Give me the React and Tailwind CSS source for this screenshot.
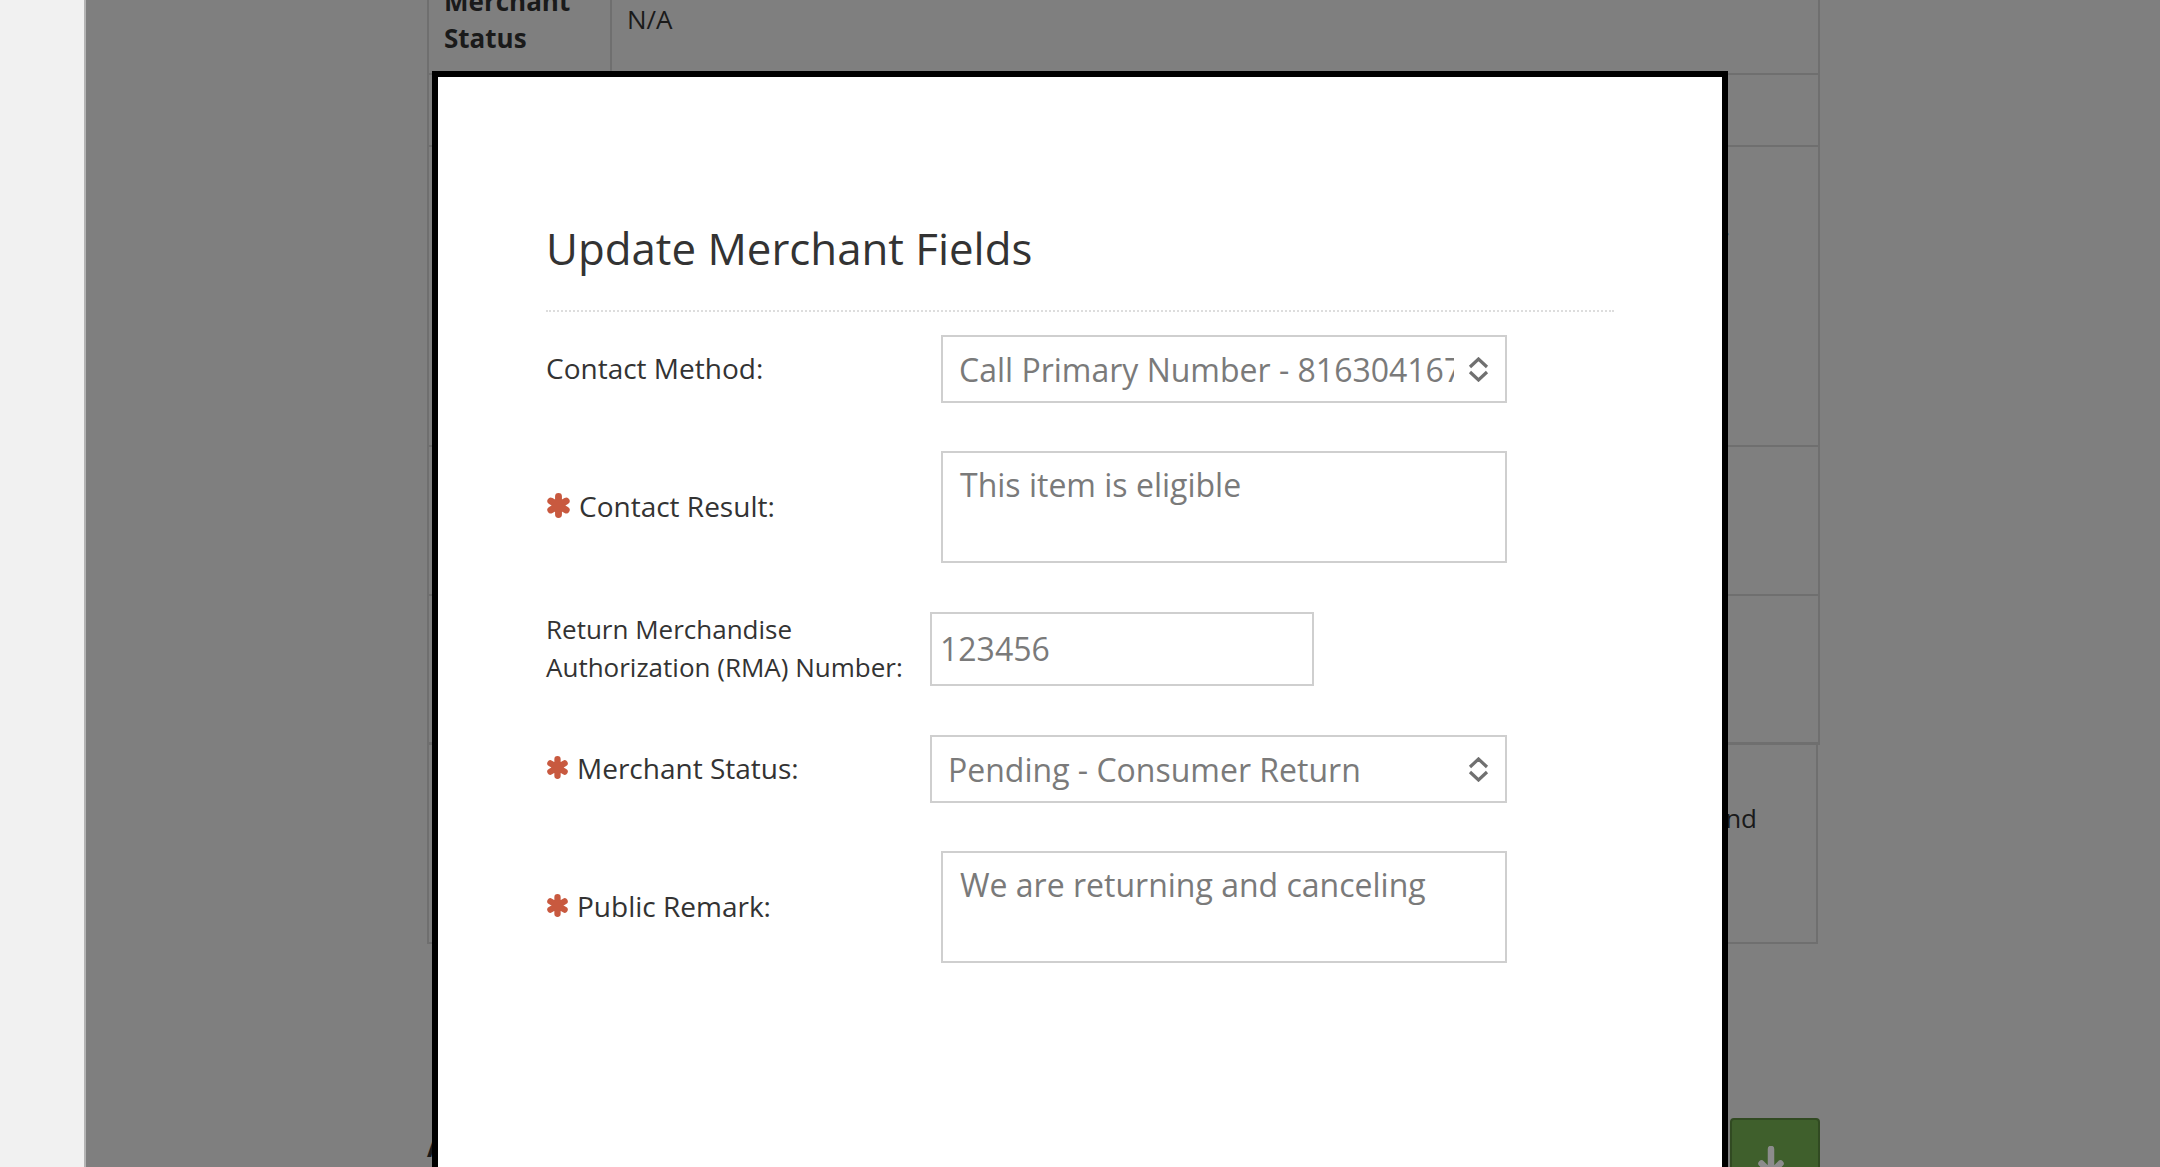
import React from "react";

function Asterisk({ className }) {
  return (
    <svg viewBox="0 0 24 24" className={className} fill="none" stroke="#c8593f" strokeWidth="6.600" strokeLinecap="round">
      <path d="M12 3.400v17.200M4.600 7.700l14.800 8.600M19.400 7.700l-14.800 8.600" />
    </svg>
  );
}

function Chevrons() {
  return (
    <svg viewBox="0 0 21 25" className="absolute right-[18px] top-[22px] w-[21px] h-[25px] pointer-events-none" fill="none" stroke="#707070" strokeWidth="3.2">
      <path d="M2 10l8.500-8 8.500 8M2 15l8.500 8 8.500-8" />
    </svg>
  );
}

function Select({ className, value, padding }) {
  return (
    <div className={"relative h-[68px] " + className}>
      <select
        defaultValue={value}
        className={"w-full h-full appearance-none bg-white border-2 border-[#cfcfcf] rounded-none pt-[2px] pr-[51px] text-[32px] text-[#7a7a7a] outline-none " + padding}
      >
        <option>{value}</option>
      </select>
      <Chevrons />
    </div>
  );
}

function Area({ value }) {
  return (
    <textarea
      defaultValue={value}
      rows={2}
      className="w-[566px] h-[112px] border-2 border-[#cfcfcf] pl-[17px] pt-[10px] resize-none outline-none text-[32px] leading-[44px] text-[#7a7a7a]"
    />
  );
}

export default function App() {
  return (
    <div className="flex h-screen overflow-hidden font-['Open_Sans',sans-serif]">
      <div className="w-[86px] shrink-0 bg-[#f1f1f1] border-r-2 border-[#b4b4b4]" />

      <div className="relative flex-1 bg-[#7f7f7f] pl-[341px] pr-[340px] text-[26px] text-[#1a1a1a]">
        {/* page behind the dialog */}
        <div className="w-[1393px] flex flex-col">
          <div className="flex h-[75px] border-x-2 border-b-2 border-[#6f6f6f]">
            <div className="w-[183px] -mt-[30px] pl-[15px] pt-[13px] font-bold leading-[37px] border-r-2 border-[#6f6f6f]">
              Merchant
              <br />
              Status
            </div>
            <div className="pl-[15px] pt-[1px] leading-[37px]">N/A</div>
          </div>
          <div className="h-[72px] border-x-2 border-b-2 border-[#6f6f6f]" />
          <div className="h-[300px] border-x-2 border-b-2 border-[#6f6f6f] flex justify-end pr-[88px] pt-[60px]">.</div>
          <div className="h-[149px] border-x-2 border-b-2 border-[#6f6f6f]" />
          <div className="h-[149px] border-x-2 border-b-[3px] border-[#6f6f6f]" />
          <div className="h-[199px] border-x-2 border-b-2 border-[#6f6f6f] flex justify-end pr-[59px] pt-[54px] mr-[2px]">and</div>

          <div className="flex justify-between mt-[174px]">
            <div className="pt-[10px] font-bold">Add</div>
            <div className="w-[90px] h-[60px] flex justify-center pt-[26px] pr-[9px] bg-[#3f5f2c] border-2 border-[#314a22] rounded-[4px]">
              <svg viewBox="0 0 26 30" className="w-[26px] h-[30px]" fill="none" stroke="#8c8c8c" strokeWidth="6.500" strokeLinecap="round">
                <path d="M13 3v24M3.500 17.500L13 27l9.500-9.500" />
              </svg>
            </div>
          </div>
        </div>

        {/* dialog */}
        <div className="absolute left-[346px] top-[71px] w-[1296px] h-[1200px] border-[6px] border-black bg-white pl-[108px] text-[#333333]">
          <div className="w-[1068px]">
            <h1 className="pt-[141px] text-[43.800px] leading-[60px] pb-[32px] border-b-2 border-dotted border-[#dddddd]">
              Update Merchant Fields
            </h1>
            <div className="pt-[23px] flex flex-col gap-[48px] text-[28px]">
              <div className="flex items-center">
                <label className="w-[395px] pb-[3px]">Contact Method:</label>
                <Select className="w-[566px]" padding="pl-[16px]" value="Call Primary Number - 8163041670" />
              </div>
              <div className="flex items-center">
                <label className="w-[395px] pb-[3px] flex items-center gap-[8px]">
                  <Asterisk className="w-[25px] h-[25px]" />
                  Contact Result:
                </label>
                <Area value="This item is eligible" />
              </div>
              <div className="flex items-center h-[76px]">
                <label className="w-[384px] -mt-[3px] text-[26px] leading-[38px]">
                  Return Merchandise
                  <br />
                  Authorization (RMA) Number:
                </label>
                <input
                  defaultValue="123456"
                  className="w-[384px] h-[74px] border-2 border-[#cfcfcf] pl-[8px] pb-[2px] outline-none text-[32px] text-[#7a7a7a]"
                />
              </div>
              <div className="flex items-center">
                <label className="w-[384px] pb-[3px] flex items-center gap-[8px]">
                  <Asterisk className="w-[23px] h-[23px]" />
                  Merchant Status:
                </label>
                <Select className="w-[577px]" padding="pl-[16px]" value="Pending - Consumer Return" />
              </div>
              <div className="flex items-center">
                <label className="w-[395px] pb-[3px] flex items-center gap-[8px]">
                  <Asterisk className="w-[23px] h-[23px]" />
                  Public Remark:
                </label>
                <Area value="We are returning and canceling" />
              </div>
            </div>
          </div>
        </div>
      </div>
    </div>
  );
}
